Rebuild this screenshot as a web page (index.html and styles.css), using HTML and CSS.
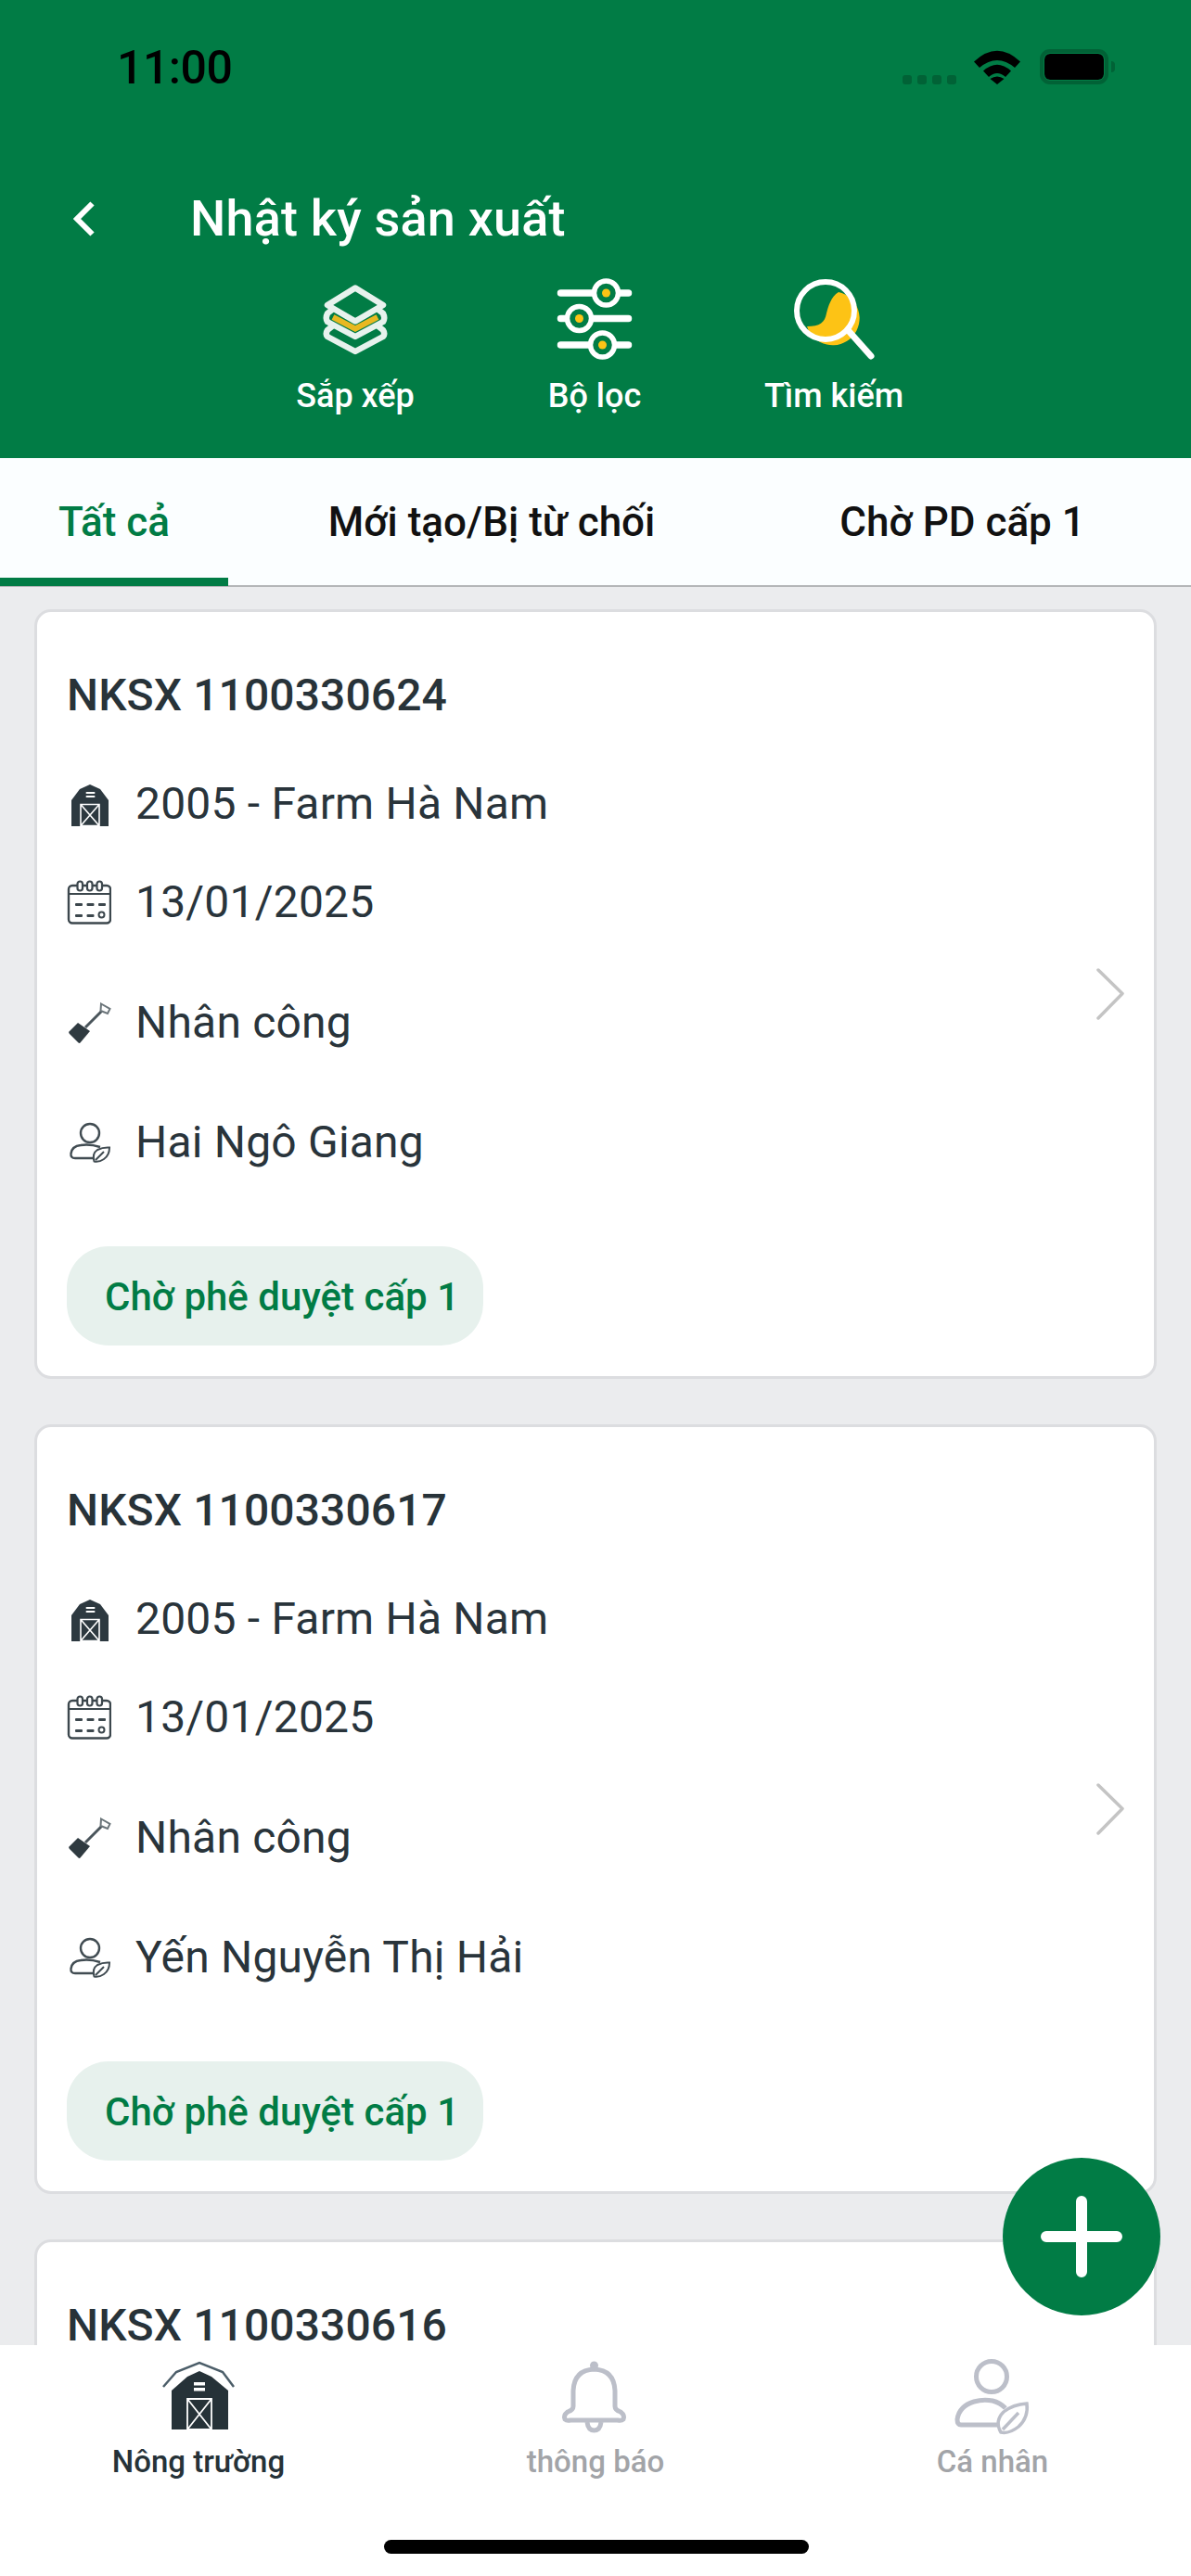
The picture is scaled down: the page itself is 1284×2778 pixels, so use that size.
FILE: index.html
```html
<!DOCTYPE html>
<html lang="vi">
<head>
<meta charset="utf-8">
<title>Nhật ký sản xuất</title>
<link rel="stylesheet" href="styles.css">
</head>
<body>
<svg class="defs" width="0" height="0" aria-hidden="true">
  <defs>
    <symbol id="barn" viewBox="0 0 48 48">
      <path d="M25 3 L36 8 L45 20 V48 H5 V20 L14 8Z" fill="#2d3940"/>
      <rect x="20.500" y="11" width="10" height="2" rx="1" fill="#fff"/>
      <rect x="20.500" y="15" width="10" height="2" rx="1" fill="#fff"/>
      <path d="M15 24.500H35V47.500H15ZM15 24.500L35 47.500M35 24.500L15 47.500" fill="none" stroke="#fff" stroke-width="1.600"/>
    </symbol>
    <symbol id="calendar" viewBox="0 0 48 48">
      <rect x="2" y="6" width="45" height="40.500" rx="4" fill="none" stroke="#3c474d" stroke-width="2.400"/>
      <path d="M2 15H47" stroke="#3c474d" stroke-width="2.200"/>
      <g fill="#fff" stroke="#3c474d" stroke-width="2.200">
        <rect x="11.500" y="1.500" width="5.500" height="10" rx="2.700"/>
        <rect x="22" y="1.500" width="5.500" height="10" rx="2.700"/>
        <rect x="32.500" y="1.500" width="5.500" height="10" rx="2.700"/>
      </g>
      <g fill="#3c474d">
        <rect x="9" y="25" width="8" height="3" rx="1"/>
        <rect x="21.500" y="25" width="8" height="3" rx="1"/>
        <rect x="34" y="25" width="8" height="3" rx="1"/>
        <rect x="9" y="37" width="8" height="3" rx="1"/>
        <rect x="21.500" y="37" width="8" height="3" rx="1"/>
      </g>
      <circle cx="37.500" cy="37.500" r="3" fill="none" stroke="#3c474d" stroke-width="2"/>
    </symbol>
    <symbol id="shovel" viewBox="0 0 48 48">
      <path d="M2.500 33.500 L12 24 L25 33 L14.500 45.500 Q13.500 46.500 12 45 L3 36 Q1.500 34.500 2.500 33.500Z" fill="#2f3a40"/>
      <path d="M20 29 L38 11" stroke="#4a555b" stroke-width="3"/>
      <path d="M37 3.500 L46.500 9 L44 14 L36.500 11Z" fill="#fff" stroke="#6b757a" stroke-width="2"/>
    </symbol>
    <symbol id="person" viewBox="0 0 48 48">
      <circle cx="25" cy="14" r="10" fill="none" stroke="#414c52" stroke-width="2.400"/>
      <path d="M31 41 H9 Q4 41 4.500 36 Q5.500 28 15 27 Q25 25.500 36 29" fill="none" stroke="#414c52" stroke-width="2.400"/>
      <path d="M29.500 44.500 Q27 36 33 32 Q39 29 46 29.500 Q46 38 40 42 Q35 45.500 29.500 44.500Z M31 43 L40 34" fill="#fff" stroke="#414c52" stroke-width="2"/>
    </symbol>
    <symbol id="chevron" viewBox="0 0 30 56">
      <path d="M2 2 L28 27.500 L2 54" fill="none" stroke="#c4c4c4" stroke-width="3.500" stroke-linecap="round" stroke-linejoin="round"/>
    </symbol>
  </defs>
</svg>

<div class="app">
  <header class="header">
    <div class="status">
      <span class="time">11:00</span>
      <div class="status-icons">
        <div class="signal"><i></i><i></i><i></i><i></i></div>
        <svg class="wifi" viewBox="0 0 50 37"><path d="M0 12.500 Q25 -11 50 12.500 L44 19 Q25 3 6 19Z M10 22.500 Q25 9 40 22.500 L34 29 Q25 21 16 29Z M17.500 31 Q25 26 32.500 31 L25 37Z" fill="#000"/></svg>
        <div class="battery"><div class="battery-fill"></div></div>
        <span class="battery-cap"></span>
      </div>
    </div>
    <div class="titlebar">
      <svg class="back" viewBox="0 0 23 38"><path d="M20.500 2.500 L4 19 L20.500 35.500" fill="none" stroke="#fff" stroke-width="6"/></svg>
      <h1 class="title">Nhật ký sản xuất</h1>
    </div>
    <div class="actions">
      <div class="action">
        <svg class="action-icon" viewBox="0 0 90 90">
          <g fill="none" stroke="#e7f2ed" stroke-width="6.500" stroke-linejoin="round" stroke-linecap="round">
            <path d="M20 52 L15 56 Q12.500 60 15 63 L45 79 L75 63 Q77.500 60 75 56 L70 52"/>
            <path d="M20 34 L15 38 Q12.500 43 15 47 L45 63 L75 47 Q77.500 43 75 38 L70 34"/>
            <path d="M45 10.500 L75 29 L45 46.500 L15 29Z"/>
          </g>
          <path d="M21 42 L45 54.500 L69 42" fill="none" stroke="#e9b821" stroke-width="6"/>
        </svg>
        <span class="action-label">Sắp xếp</span>
      </div>
      <div class="action">
        <svg class="action-icon" viewBox="0 0 90 90">
          <path d="M8.500 16H81.500M8.500 43.500H81.500M8.500 72H81.500" stroke="#fff" stroke-width="7.500" stroke-linecap="round"/>
          <g fill="#017c45" stroke="#fff" stroke-width="5.500">
            <circle cx="57.500" cy="16" r="13"/><circle cx="28.500" cy="43.500" r="13"/><circle cx="53.500" cy="72" r="13"/>
          </g>
          <g fill="#fdc315"><circle cx="57.500" cy="16" r="4.500"/><circle cx="28.500" cy="43.500" r="4.500"/><circle cx="53.500" cy="72" r="4.500"/></g>
        </svg>
        <span class="action-label">Bộ lọc</span>
      </div>
      <div class="action">
        <svg class="action-icon" viewBox="0 0 90 90">
          <path d="M50 15 C42 20 39 30 37 38 C35 48 30 52 16 52 A29 29 0 1 0 50 15Z" fill="#fdc315"/>
          <circle cx="36" cy="35" r="31" fill="none" stroke="#fff" stroke-width="6"/>
          <path d="M61 57 L85 84" stroke="#fff" stroke-width="7" stroke-linecap="round"/>
        </svg>
        <span class="action-label">Tìm kiếm</span>
      </div>
    </div>
  </header>

  <nav class="tabs">
    <div class="tab tab-first tab-active">Tất cả</div>
    <div class="tab tab-second">Mới tạo/Bị từ chối</div>
    <div class="tab tab-third">Chờ PD cấp 1</div>
  </nav>

  <main class="list">
    <article class="card">
      <div class="card-body">
        <h2 class="card-title">NKSX 1100330624</h2>
        <div class="row row-farm"><svg class="row-icon"><use href="#barn"/></svg><span>2005 - Farm Hà Nam</span></div>
        <div class="row row-date"><svg class="row-icon"><use href="#calendar"/></svg><span>13/01/2025</span></div>
        <div class="row row-work"><svg class="row-icon"><use href="#shovel"/></svg><span>Nhân công</span></div>
        <div class="row row-user"><svg class="row-icon"><use href="#person"/></svg><span>Hai Ngô Giang</span></div>
        <div class="pill">Chờ phê duyệt cấp 1</div>
      </div>
      <svg class="chevron"><use href="#chevron"/></svg>
    </article>
    <article class="card">
      <div class="card-body">
        <h2 class="card-title">NKSX 1100330617</h2>
        <div class="row row-farm"><svg class="row-icon"><use href="#barn"/></svg><span>2005 - Farm Hà Nam</span></div>
        <div class="row row-date"><svg class="row-icon"><use href="#calendar"/></svg><span>13/01/2025</span></div>
        <div class="row row-work"><svg class="row-icon"><use href="#shovel"/></svg><span>Nhân công</span></div>
        <div class="row row-user"><svg class="row-icon"><use href="#person"/></svg><span>Yến Nguyễn Thị Hải</span></div>
        <div class="pill">Chờ phê duyệt cấp 1</div>
      </div>
      <svg class="chevron"><use href="#chevron"/></svg>
    </article>
    <article class="card">
      <div class="card-body">
        <h2 class="card-title">NKSX 1100330616</h2>
      </div>
    </article>
  </main>

  <button class="fab" type="button" aria-label="Thêm">
    <svg viewBox="0 0 88 88"><path d="M44 6V82M6 44H82" stroke="#fff" stroke-width="12" stroke-linecap="round"/></svg>
  </button>

  <footer class="bottom">
    <div class="nav">
      <div class="nav-item nav-active">
        <svg class="nav-icon" viewBox="0 0 76 78">
          <path d="M0 29 L14 13 L39 3 L64 13 L76 29" fill="none" stroke="#4c5e69" stroke-width="2.500"/>
          <path d="M39 12 L52 18 L70 33 V75 H9 V33 L26 18Z" fill="#263238"/>
          <rect x="33" y="24" width="12" height="3.500" fill="#fff"/><rect x="33" y="30" width="12" height="3.500" fill="#fff"/>
          <path d="M26 42H52V75H26ZM26 42L52 75M52 42L26 75" fill="none" stroke="#fff" stroke-width="1.800"/>
        </svg>
        <span class="nav-label">Nông trường</span>
      </div>
      <div class="nav-item">
        <svg class="nav-icon" viewBox="0 0 76 78">
          <path d="M36.500 10 Q58 11 59 33 V50 Q59 54 65 56 Q70 60 68 64 Q66 66 62 65 H11 Q7 66 5 64 Q3 60 8 56 Q14 54 14 50 V33 Q15 11 36.500 10Z" fill="none" stroke="#bcbfc9" stroke-width="5"/>
          <circle cx="36.500" cy="6" r="4.500" fill="#bcbfc9"/>
          <path d="M29 67 Q30 76 36.500 76 Q43 76 44 67" fill="none" stroke="#bcbfc9" stroke-width="5"/>
        </svg>
        <span class="nav-label">thông báo</span>
      </div>
      <div class="nav-item">
        <svg class="nav-icon" viewBox="0 0 76 78">
          <circle cx="37" cy="18" r="16.500" fill="none" stroke="#bcbfc9" stroke-width="5"/>
          <path d="M46 70 H4 Q0 70 0 64 Q2 50 18 45 Q28 42 38 44 Q46 46 52 52" fill="none" stroke="#bcbfc9" stroke-width="5"/>
          <path d="M47 78 Q40 66 50 56 Q60 48 75 47 Q77 62 66 72 Q56 80 47 78Z M49 75 L66 57" fill="#fff" stroke="#bcbfc9" stroke-width="3.500"/>
        </svg>
        <span class="nav-label">Cá nhân</span>
      </div>
    </div>
    <div class="home-indicator"></div>
  </footer>
</div>
</body>
</html>
```
FILE: styles.css
```css
* { box-sizing: border-box; }
html, body { margin: 0; padding: 0; }
body { font-family: Roboto, "Noto Sans", sans-serif; background: #ebecee; }
.defs { position: absolute; }

.app {
  position: relative;
  width: 1284px;
  height: 2778px;
  display: flex;
  flex-direction: column;
  overflow: hidden;
  background: #ebecee;
}

/* Header */
.header {
  height: 494px;
  flex: none;
  background: #017c45;
  color: #fff;
}
.status {
  height: 191px;
  padding: 46px 82px 0 126px;
  display: flex;
  justify-content: space-between;
  align-items: flex-start;
}
.time { margin-top: 1px; font-size: 50px; line-height: 52px; font-weight: 500; color: #000; letter-spacing: -0.5px; }
.status-icons { display: flex; align-items: flex-end; height: 50px; }
.signal { display: flex; gap: 6px; margin-right: 19px; margin-bottom: 5px; }
.signal i { width: 10px; height: 10px; border-radius: 3px; background: #016236; }
.wifi { width: 50px; height: 37px; margin-right: 21px; margin-bottom: 5px; }
.battery {
  width: 74px;
  height: 38px;
  padding: 5px;
  border-radius: 11px;
  background: #016236;
  margin-bottom: 5px;
}
.battery-fill { width: 100%; height: 100%; background: #000; border-radius: 6px; outline: 1px solid #017c45; }
.battery-cap { width: 4px; height: 12px; background: #016236; border-radius: 0 6px 6px 0; margin: 0 0 18px 3px; }

.titlebar { height: 90px; display: flex; align-items: center; padding-left: 79px; }
.back { width: 23px; height: 38px; margin-right: 103px; flex: none; }
.title { margin: 0; font-size: 54px; line-height: 70px; font-weight: 500; letter-spacing: 0.2px; }

.actions { display: flex; padding-left: 254px; margin-top: 19px; }
.action { width: 258px; display: flex; flex-direction: column; align-items: center; }
.action-icon { width: 90px; height: 90px; display: block; }
.action-label { margin-top: 15px; font-size: 36px; line-height: 44px; font-weight: 500; }

/* Tabs */
.tabs {
  height: 139px;
  flex: none;
  display: flex;
  background: #fbfeff;
  border-bottom: 2px solid #b4b6b8;
}
.tab {
  height: 138px;
  font-size: 44px;
  line-height: 139px;
  font-weight: 500;
  color: #111;
  text-align: center;
  flex: none;
}
.tab-first { width: 246px; }
.tab-second { width: 568px; }
.tab-third { width: 447px; }
.tab-active { color: #017c45; border-bottom: 9px solid #017c45; }

/* Cards: the list runs on under the bottom bar, which paints over it */
.list {
  flex: 1;
  min-height: 0;
  padding: 24px 37px 0;
  display: flex;
  flex-direction: column;
  gap: 49px;
}
.card {
  flex: none;
  background: #fff;
  border: 3px solid #dcdde0;
  border-radius: 18px;
  height: 830px;
  display: flex;
  justify-content: space-between;
  align-items: center;
  padding-left: 32px;
  padding-right: 32px;
}
.card-body { flex: 1; align-self: flex-start; }
.card-title {
  margin: 70px 0 0;
  height: 40px;
  font-size: 48px;
  line-height: 40px;
  font-weight: 500;
  color: #283339;
  letter-spacing: 0.1px;
}
.row {
  display: flex;
  align-items: center;
  height: 60px;
  font-size: 48px;
  line-height: 60px;
  color: #29343b;
  letter-spacing: 0.2px;
}
.row-farm { margin-top: 67px; }
.row-date { margin-top: 46px; }
.row-work { margin-top: 70px; }
.row-user { margin-top: 69px; }
.row-icon { width: 48px; height: 48px; margin-right: 26px; flex: none; }
.pill {
  width: 449px;
  height: 107px;
  margin-top: 82px;
  padding-left: 41px;
  border-radius: 45px;
  background: #e7f1ed;
  color: #017c45;
  font-size: 42px;
  font-weight: 500;
  line-height: 109px;
  white-space: nowrap;
}
.chevron { width: 30px; height: 56px; flex: none; }

/* FAB */
.fab {
  position: absolute;
  left: 1081px;
  top: 2327px;
  width: 170px;
  height: 170px;
  padding: 0;
  border: none;
  border-radius: 50%;
  background: #017c45;
  display: flex;
  align-items: center;
  justify-content: center;
}
.fab svg { width: 88px; height: 88px; }

/* Bottom nav */
.bottom {
  height: 249px;
  flex: none;
  background: #fff;
  position: relative;
}
.nav { display: grid; grid-template-columns: repeat(3, 1fr); padding-top: 16px; }
.nav-item { display: flex; flex-direction: column; align-items: center; }
.nav-icon { width: 76px; height: 78px; display: block; overflow: visible; }
.nav-label { margin-top: 10px; font-size: 33px; line-height: 44px; font-weight: 500; color: #a2a4a8; }
.nav-active .nav-label { color: #263238; }
.home-indicator {
  position: absolute;
  left: 414px;
  top: 210px;
  width: 458px;
  height: 15px;
  border-radius: 8px;
  background: #000;
}
```
